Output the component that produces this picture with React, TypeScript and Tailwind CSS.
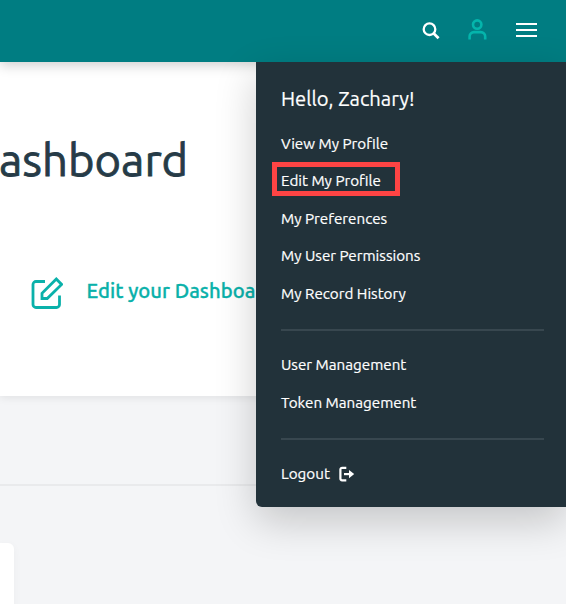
const profileLinks = [
  { label: 'View My Profile' },
  { label: 'Edit My Profile', marked: true },
  { label: 'My Preferences' },
  { label: 'My User Permissions' },
  { label: 'My Record History' },
];

const adminLinks = [{ label: 'User Management' }, { label: 'Token Management' }];

function SearchIcon() {
  return (
    <svg className="h-[18px] w-[18px]" viewBox="0 0 18 18" fill="none" stroke="#fff">
      <circle cx="7.5" cy="7.2" r="5.8" strokeWidth="2.3" />
      <path d="M11.5 11.2 16.6 16.2" strokeWidth="2.8" />
    </svg>
  );
}

function UserIcon() {
  return (
    <svg className="h-[21px] w-[19px]" viewBox="0 0 19 21" fill="none" stroke="#04b5ac" strokeWidth="2.6">
      <circle cx="9.2" cy="5.6" r="4.2" />
      <path d="M1.6 20.5v-3a4.4 4.4 0 0 1 4.4-4.4h6.8a4.4 4.4 0 0 1 4.4 4.4v3" />
    </svg>
  );
}

function EditIcon() {
  return (
    <svg className="h-8 w-8" viewBox="0 0 32 32" fill="none" stroke="#0ab1aa" strokeWidth="2.8" strokeLinejoin="round">
      <path d="M14 4.5H5a3 3 0 0 0-3 3v20a3 3 0 0 0 3 3h20.500a3 3 0 0 0 3-3v-9" />
      <path d="M25.300 2.100 30.600 7.400 16.200 21.500h-5.200v-5.200z" strokeLinejoin="miter" />
    </svg>
  );
}

function LogoutIcon() {
  return (
    <svg className="-mt-0.5 h-4 w-4" viewBox="0 0 16 16" fill="none" stroke="#fff" strokeWidth="2.2">
      <path d="M7.300 1.800H3.100A1.700 1.700 0 0 0 1.400 3.500v9.100a1.700 1.700 0 0 0 1.700 1.700h4.200" />
      <path d="M5 8.100h7" />
      <path d="M10 3.900 15.200 8.100 10 12.300z" fill="#fff" stroke="none" />
    </svg>
  );
}

function MenuLink({ label, marked }: { label: string; marked?: boolean }) {
  return (
    <a className="relative flex h-[37.5px] items-center whitespace-nowrap">
      <span>{label}</span>
      {marked && <span className="absolute -left-[9px] top-[-0.8px] h-[34px] w-32 border-[5px] border-[#ff4444]" />}
    </a>
  );
}

export default function App() {
  return (
    <div className="relative flex h-[604px] w-[566px] flex-col overflow-hidden bg-[#f4f5f7] font-['Ubuntu','Noto_Sans',sans-serif]">
      <header className="relative z-10 flex h-[62px] shrink-0 items-center justify-end bg-[#007d82] pr-[29px] shadow-[0_3px_12px_rgba(0,0,0,0.2)]">
        <span className="mr-[28px] -mt-px">
          <SearchIcon />
        </span>
        <span className="mr-[29px] -mt-[3px]">
          <UserIcon />
        </span>
        <span className="-mt-0.5 flex flex-col gap-1">
          <span className="h-0.5 w-[21px] bg-white" />
          <span className="h-0.5 w-[21px] bg-white" />
          <span className="h-0.5 w-[21px] bg-white" />
        </span>
      </header>

      <section className="h-[334px] shrink-0 bg-white shadow-[0_2px_8px_rgba(0,0,0,0.08)]">
        <h1 className="-ml-px pt-[68px] text-[45.4px] leading-[60px] text-[#263b47] [-webkit-text-stroke:0.8px_#263b47]">ashboard</h1>
        <div className="mt-[87px] flex items-center whitespace-nowrap pl-[31px]">
          <EditIcon />
          <span className="-mt-[5px] ml-[23.6px] text-[20.25px] font-medium leading-7 text-[#0ab1aa] [-webkit-text-stroke:0.3px_#0ab1aa]">
            Edit your Dashboard
          </span>
        </div>
      </section>

      <div className="mt-[88px] h-0.5 shrink-0 bg-[#e9eaec]" />
      <div className="mt-[57px] h-20 w-3.5 shrink-0 rounded-tr-md bg-white shadow-[0_2px_8px_rgba(0,0,0,0.04)]" />

      <nav className="absolute left-64 top-[62px] z-20 h-[445px] w-[310px] rounded-bl-md bg-[#22323a] px-[25px] text-[15.2px] text-white shadow-[0_14px_42px_rgba(0,0,0,0.2)] [-webkit-text-stroke:0.2px_#fff]">
        <h2 className="pt-[23px] text-[20.2px] leading-7">Hello, Zachary!</h2>
        <div className="mt-[12.4px]">
          {profileLinks.map((link) => (
            <MenuLink key={link.label} {...link} />
          ))}
        </div>
        <hr className="mt-[16.1px] h-0.5 w-[263px] border-0 bg-[#38474f]" />
        <div className="mt-[15.8px]">
          {adminLinks.map((link) => (
            <MenuLink key={link.label} {...link} />
          ))}
        </div>
        <hr className="mt-[16.2px] h-0.5 w-[263px] border-0 bg-[#38474f]" />
        <a className="mt-[16px] flex h-[37.5px] items-center gap-[9px]">
          <span>Logout</span>
          <LogoutIcon />
        </a>
      </nav>
    </div>
  );
}
